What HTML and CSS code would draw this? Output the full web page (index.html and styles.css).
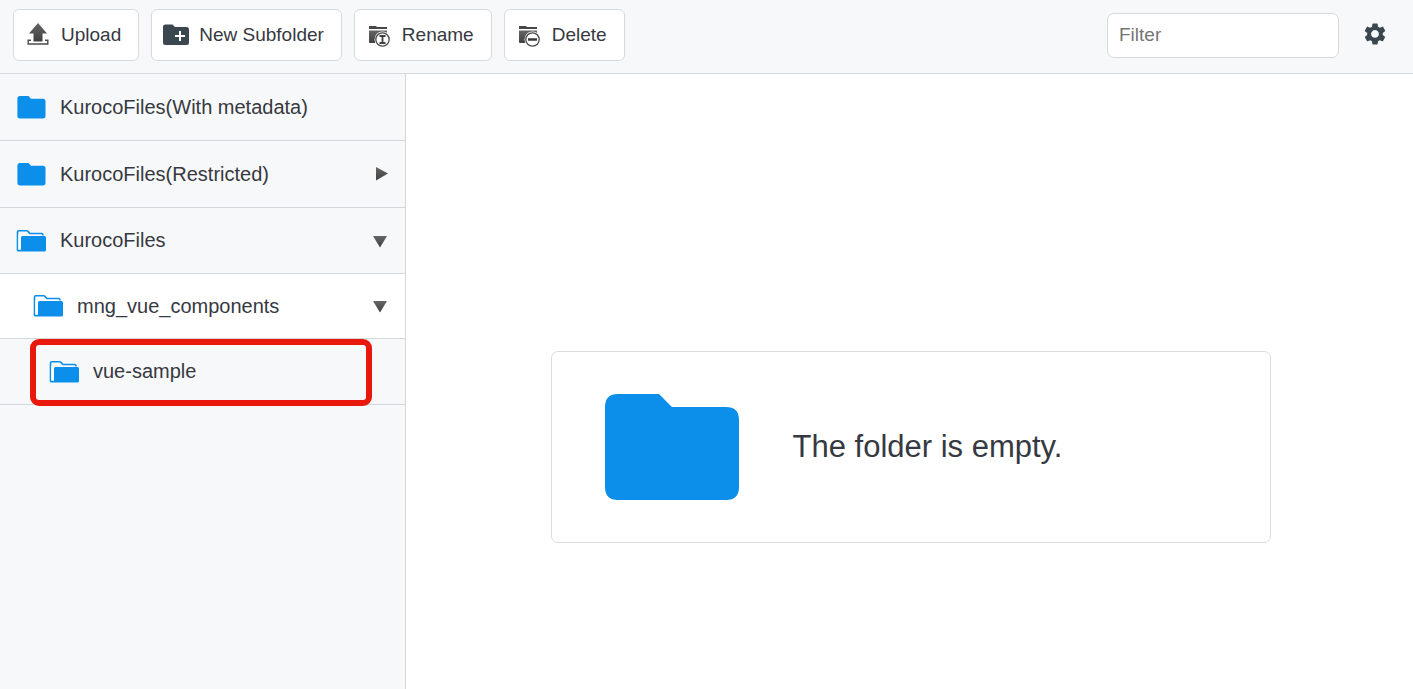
FILE: index.html
```html
<!DOCTYPE html>
<html lang="en">
<head>
<meta charset="utf-8">
<title>File manager</title>
<link rel="stylesheet" href="styles.css">
</head>
<body>
<svg class="defs" aria-hidden="true">
  <defs>
    <linearGradient id="dark" x1="0" y1="0" x2="0" y2="1">
      <stop offset="0" stop-color="#666"/><stop offset="1" stop-color="#404040"/>
    </linearGradient>
    <symbol id="folder" viewBox="0 0 30 24">
      <path d="M4 1H12.500L15 3.700H27Q29.500 3.700 29.500 6.200V20.800Q29.500 23.500 27 23.500H4Q1.400 23.500 1.400 20.800V3.600Q1.400 1 4 1Z" fill="#0b8feb"/>
    </symbol>
    <symbol id="folder-open" viewBox="0 0 30 24">
      <path d="M1.500 21V3Q1.500 1.800 2.700 1.800H10.500Q11.500 1.800 12.200 2.600L13.900 4.500H25.500Q27 4.500 27 6.500" fill="none" stroke="#0b8feb" stroke-width="1.600"/>
      <path d="M3.300 6V21" stroke="#fff" stroke-width="1.800"/>
      <path d="M.7 20.800H5V8.500Q5 7 6.500 7H28.600Q30 7 30 8.500V21Q30 22.500 28.500 22.500H2.200Q.7 22.500 .7 21Z" fill="#0b8feb"/>
    </symbol>
    <symbol id="gray-folder" viewBox="0 0 24 24">
      <path d="M2 3H9L10 4H20V6H2Z" fill="#484848"/>
      <path d="M2 7.500H20V20H3Q2 20 2 19Z" fill="url(#dark)"/>
      <circle cx="15.500" cy="16.500" r="8" fill="#fff"/>
      <circle cx="15.500" cy="16.500" r="6.700" fill="#fff" stroke="#484848" stroke-width="1.300"/>
    </symbol>
  </defs>
</svg>
<header class="toolbar">
  <div class="actions">
    <button class="button" type="button"><svg class="icon" viewBox="0 0 24 24"><path d="M12 0 21 10.500H16.500V18.500H7.500V10.500H3Z" fill="url(#dark)"/><path d="M5 17.200H2.200V21H21.800V17.200H19" fill="none" stroke="#4a4a4a" stroke-width="1.400"/></svg>Upload</button>
    <button class="button button-new" type="button"><svg class="icon icon-wide" viewBox="0 0 26 24"><path d="M2.500 1.500H9.500L12 4H23.500Q26 4 26 6.500V19.500Q26 22 23.500 22H2.500Q0 22 0 19.500V4Q0 1.500 2.500 1.500Z" fill="#3a474e"/><path d="M17 8V18M12 13H22" stroke="#fff" stroke-width="2"/></svg>New Subfolder</button>
    <button class="button" type="button"><svg class="icon" viewBox="0 0 24 24"><use href="#gray-folder"/><path d="M12.500 13H18.500M12.500 20H18.500M15.500 13V20" stroke="#404040" stroke-width="1.800"/></svg>Rename</button>
    <button class="button" type="button"><svg class="icon" viewBox="0 0 24 24"><use href="#gray-folder"/><path d="M11 16.500H20" stroke="#383838" stroke-width="2.500"/></svg>Delete</button>
  </div>
  <div class="tools">
    <input class="filter" type="text" placeholder="Filter" aria-label="Filter">
    <button class="settings" type="button" aria-label="Settings"><svg class="icon" viewBox="1 2 22 22"><path fill="#3a474e" d="M19.140 12.940c.04-.3.060-.61.060-.94 0-.32-.02-.64-.07-.94l2.030-1.580c.18-.14.23-.41.120-.61l-1.920-3.320c-.12-.22-.37-.29-.59-.22l-2.390.96c-.5-.38-1.030-.7-1.620-.94l-.36-2.540c-.04-.24-.24-.41-.48-.41h-3.840c-.24 0-.43.170-.47.410l-.36 2.540c-.59.240-1.130.570-1.620.940l-2.390-.96c-.22-.08-.47 0-.59.220L2.740 8.870c-.12.210-.08.470.120.610l2.030 1.580c-.05.300-.09.630-.09.940s.02.640.070.940l-2.030 1.580c-.18.140-.23.410-.12.610l1.920 3.320c.12.220.370.290.590.220l2.390-.96c.5.380 1.030.700 1.620.940l.36 2.540c.05.240.240.410.480.410h3.840c.24 0 .44-.17.470-.41l.36-2.540c.59-.24 1.130-.56 1.620-.94l2.390.96c.22.080.470 0 .59-.22l1.920-3.320c.12-.22.070-.47-.12-.61l-2.010-1.580zM12 15.600c-1.980 0-3.600-1.620-3.600-3.600s1.620-3.600 3.600-3.600 3.600 1.620 3.600 3.600-1.620 3.600-3.600 3.600z"/></svg></button>
  </div>
</header>
<div class="workspace">
  <nav class="tree" aria-label="Folders">
    <a class="row" href="#metadata"><svg class="folder"><use href="#folder"/></svg><span class="name">KurocoFiles(With metadata)</span></a>
    <a class="row" href="#restricted"><svg class="folder"><use href="#folder"/></svg><span class="name">KurocoFiles(Restricted)</span><svg class="arrow" viewBox="0 0 14 14"><path d="M3 0 15 6.500 3 13.500Z" fill="url(#dark)"/></svg></a>
    <a class="row" href="#files"><svg class="folder"><use href="#folder-open"/></svg><span class="name">KurocoFiles</span><svg class="arrow" viewBox="0 0 14 14"><path d="M0 2H14L7 13.500Z" fill="url(#dark)"/></svg></a>
    <a class="row row-child" href="#components"><svg class="folder"><use href="#folder-open"/></svg><span class="name">mng_vue_components</span><svg class="arrow" viewBox="0 0 14 14"><path d="M0 2H14L7 13.500Z" fill="url(#dark)"/></svg></a>
    <a class="row row-grandchild" href="#sample"><svg class="folder"><use href="#folder-open"/></svg><span class="name">vue-sample</span></a>
  </nav>
  <main class="content">
    <section class="empty"><svg class="empty-icon" viewBox="0 0 134 106"><path d="M13 0H54L67 13H121Q134 13 134 26V93Q134 106 121 106H13Q0 106 0 93V13Q0 0 13 0Z" fill="#0b8feb"/></svg><p class="message">The folder is empty.</p></section>
  </main>
</div>
</body>
</html>
```

FILE: styles.css
```css
* { box-sizing: border-box; }
body {
  display: flex;
  flex-direction: column;
  min-height: 100vh;
  margin: 0;
  background: #fff;
  color: #36393f;
  font-family: "Liberation Sans", Arial, sans-serif;
  font-size: 20px;
}
svg { display: block; flex: none; }
.defs { position: absolute; width: 0; height: 0; }
.toolbar {
  display: flex;
  align-items: center;
  justify-content: space-between;
  padding: 9px 26px 12px 13px;
  border-bottom: 1px solid #d6dadd;
  background: #f7f8fa;
}
.actions { display: flex; gap: 12px; }
.tools { display: flex; align-items: center; gap: 24px; }
.button {
  display: flex;
  align-items: center;
  gap: 11px;
  height: 52px;
  padding: 0 17px 0 12px;
  border: 1px solid #d6dade;
  border-radius: 6px;
  background: #fff;
  color: inherit;
  font: inherit;
  font-size: 19px;
}
.button-new { padding-left: 11px; gap: 10px; }
.icon { width: 24px; height: 24px; }
.icon-wide { width: 26px; }
.filter {
  width: 232px;
  height: 45px;
  padding: 0 11px;
  border: 1px solid #d4dadc;
  border-radius: 7px;
  background: #fff;
  color: inherit;
  font: inherit;
  font-size: 19px;
}
.filter::placeholder { color: #757575; opacity: 1; }
.settings { padding: 0; border: 0; background: none; }
.workspace { display: flex; flex: 1; }
.tree {
  width: 406px;
  border-right: 1px solid #d3d8db;
  background: #f7f8fa;
}
.row {
  display: flex;
  align-items: center;
  gap: 14px;
  height: 66px;
  padding: 0 18px 0 16px;
  border-bottom: 1px solid #d3d8db;
  color: inherit;
  text-decoration: none;
}
.row:nth-child(-n+2) { height: 67px; }
.row-child { height: 65px; padding-left: 33px; background: #fff; }
.row-grandchild { position: relative; padding-left: 49px; }
.row-grandchild::after {
  content: "";
  position: absolute;
  inset: 0 33px -2px 30px;
  border: 6px solid #e8190c;
  border-radius: 9px;
}
.folder { width: 30px; height: 24px; }
.name { flex: 1; }
.arrow { width: 14px; height: 14px; overflow: visible; }
.content {
  display: flex;
  flex: 1;
  align-items: center;
  justify-content: center;
  padding: 130px 0 0 2px;
}
.empty {
  display: flex;
  align-items: center;
  gap: 54px;
  width: 720px;
  padding: 42px 53px;
  border: 1px solid #d9dde0;
  border-radius: 7px;
}
.empty-icon { width: 134px; height: 106px; }
.message { margin: 0; font-size: 31px; }
```
